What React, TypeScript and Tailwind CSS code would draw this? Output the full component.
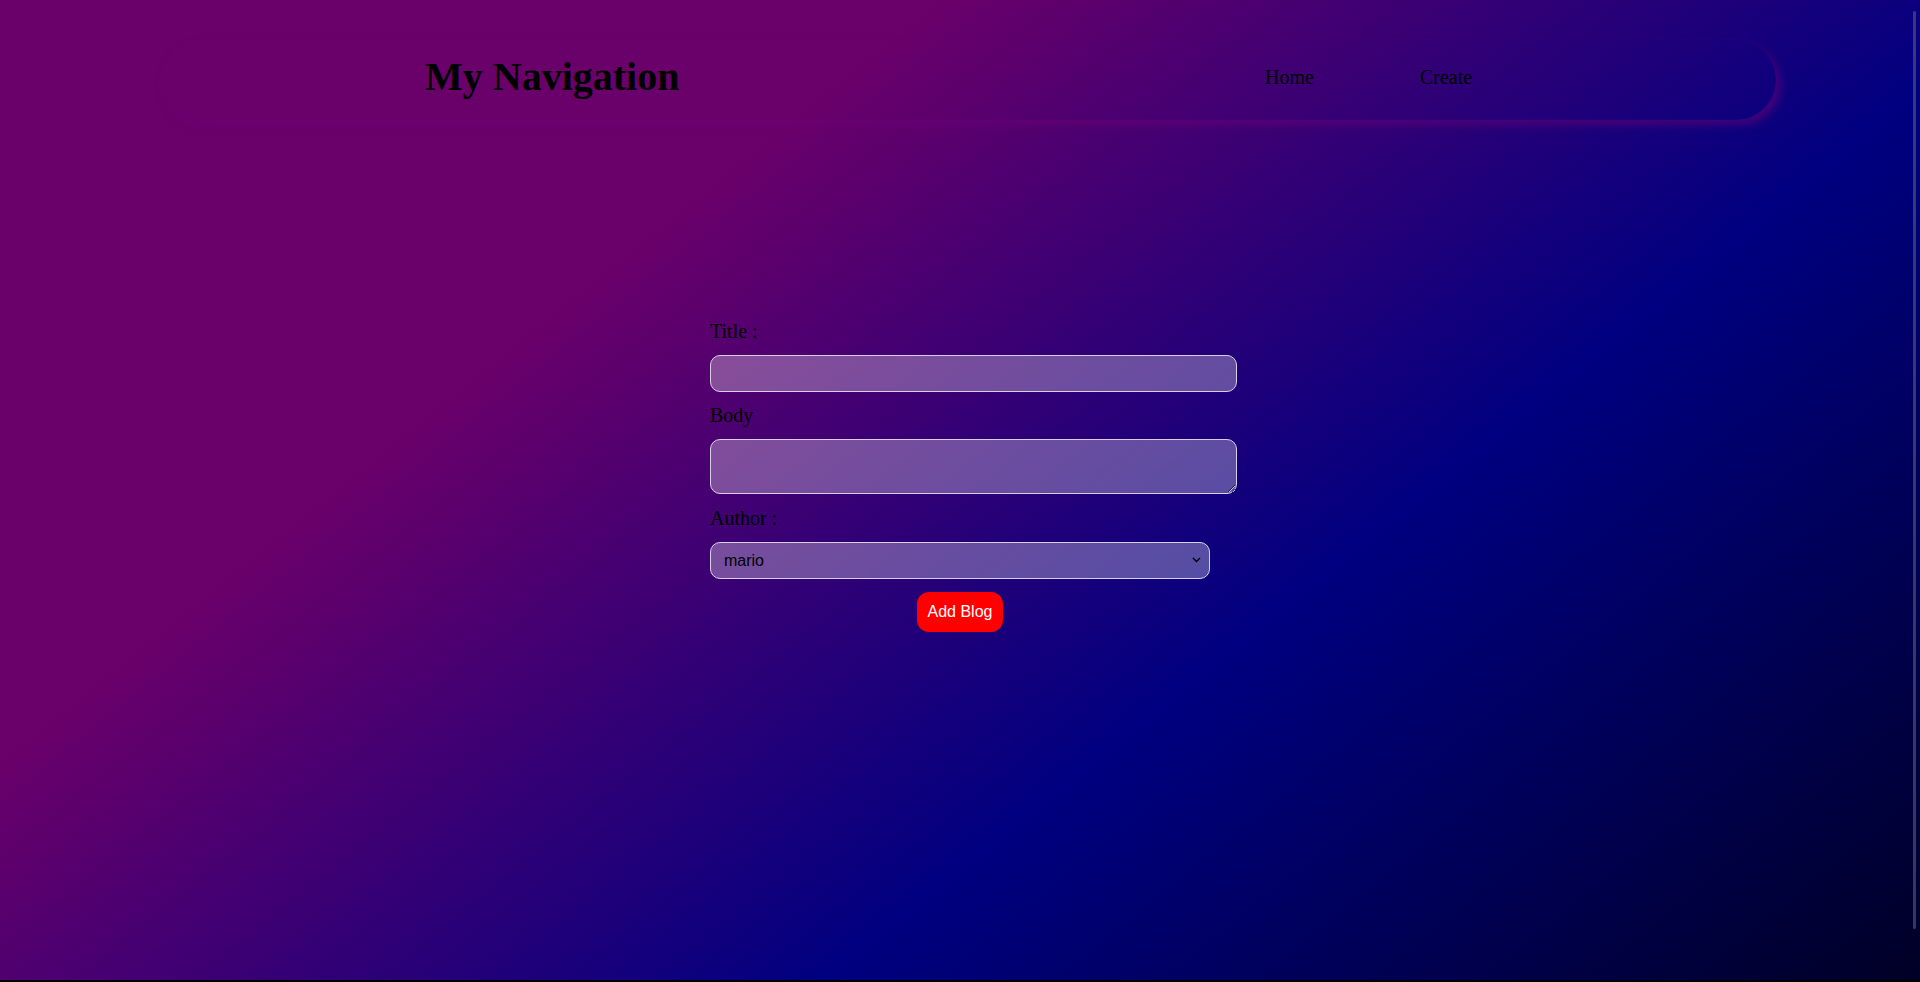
import React from "react";

export default function App() {
  return (
    <div className="relative w-[1920px] h-[982px] overflow-hidden bg-black">
      <div className="h-[980px] w-full bg-[linear-gradient(141deg,#6a006a_30%,#000080_65%,#000000_115%)] pt-[40px]">
        <nav className="ml-[160px] w-[1616px] h-[80px] rounded-[40px] shadow-[5px_5px_9px_rgba(110,0,120,0.55)] flex items-center pl-[265px] pb-[6px] font-['Liberation_Serif',serif] text-black">
          <h1 className="w-[840px] text-[40px] font-bold leading-none">My Navigation</h1>
          <a className="text-[20px] leading-none">Home</a>
          <a className="ml-[106px] text-[20px] leading-none">Create</a>
        </nav>

        <form className="mt-[200px] mx-auto w-[500px] flex flex-col font-['Liberation_Serif',serif] text-black">
          <label className="block text-[20px] leading-[23px]">Title :</label>
          <input
            type="text"
            className="mt-[12px] w-[527px] h-[37px] rounded-[10px] border border-[#d9d0e6] bg-white/30 px-[12px] outline-none"
          />
          <label className="mt-[12px] block text-[20px] leading-[23px]">Body</label>
          <textarea className="mt-[12px] w-[527px] h-[55px] rounded-[10px] border border-[#d9d0e6] bg-white/30 px-[12px] outline-none" />
          <label className="mt-[13px] block text-[20px] leading-[23px]">Author :</label>
          <div className="relative mt-[12px] w-[500px] h-[37px]">
            <select
              defaultValue="mario"
              className="appearance-none w-full h-full rounded-[10px] border border-[#d9d0e6] bg-white/30 pl-[13px] text-[16px] text-black font-['Liberation_Sans',Arial,sans-serif] outline-none"
            >
              <option value="mario">mario</option>
              <option value="yoshi">yoshi</option>
            </select>
            <svg
              className="pointer-events-none absolute right-[9px] top-[15px]"
              width="9"
              height="6"
              viewBox="0 0 9 6"
              fill="none"
            >
              <path d="M1 1L4.5 4.5L8 1" stroke="#000" strokeWidth="1.5" />
            </svg>
          </div>
          <button
            type="button"
            className="mt-[13px] self-center h-[40px] px-[11px] rounded-[12px] bg-[#ff0000] text-white text-[16px] font-['Liberation_Sans',Arial,sans-serif]"
          >
            Add Blog
          </button>
        </form>
      </div>
      <div className="absolute left-[1913px] top-[11px] w-[3px] h-[918px] bg-[#5a5a8a]/60 rounded-full" />
    </div>
  );
}
